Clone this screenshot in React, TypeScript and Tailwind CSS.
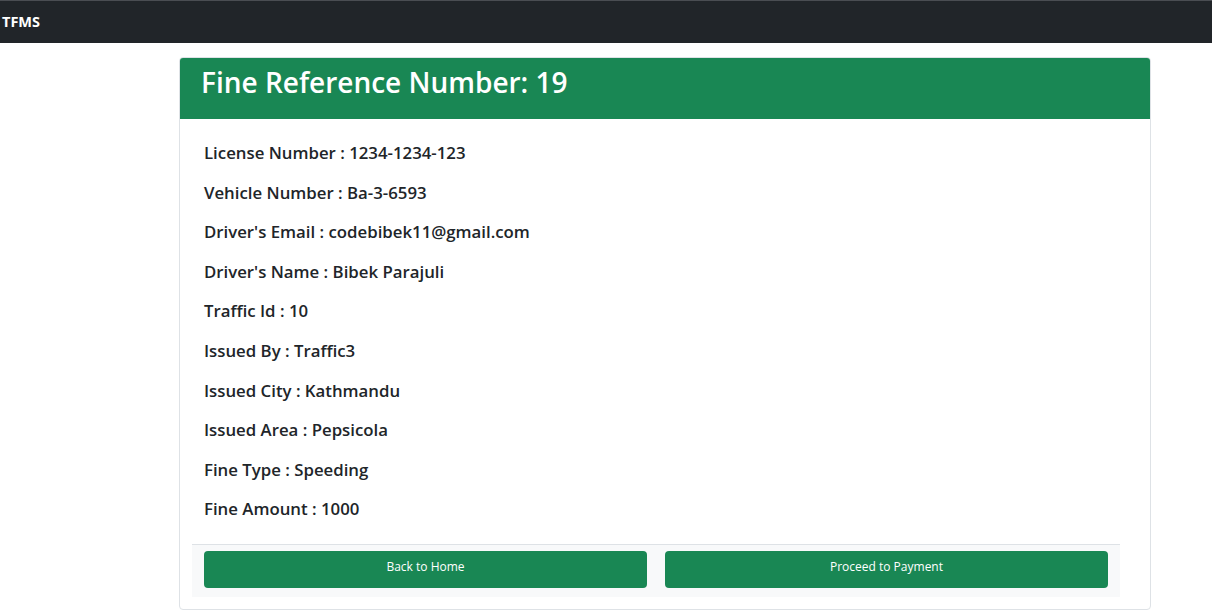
const details = [
  ["License Number", "1234-1234-123"],
  ["Vehicle Number", "Ba-3-6593"],
  ["Driver's Email", "codebibek11@gmail.com"],
  ["Driver's Name", "Bibek Parajuli"],
  ["Traffic Id", "10"],
  ["Issued By", "Traffic3"],
  ["Issued City", "Kathmandu"],
  ["Issued Area", "Pepsicola"],
  ["Fine Type", "Speeding"],
  ["Fine Amount", "1000"],
];

export default function App() {
  return (
    <div className="min-h-[615px] bg-white text-[#212529] font-['Open_Sans',sans-serif]">
      <nav className="h-[43px] bg-[#212529] border-t border-[#4a4d52] flex items-center">
        <span className="pl-[2px] text-white font-bold text-[14.5px]">TFMS</span>
      </nav>

      <div className="pt-[14px] pl-[179px] w-[1151px]">
        <div className="border border-[#dee2e6] rounded-[4px] overflow-hidden h-[553px] flex flex-col">
          <div className="bg-[#198754] h-[61px] px-[21px] pt-[4px]">
            <h1 className="text-white text-[28px] leading-[40px] font-semibold">Fine Reference Number: 19</h1>
          </div>
          <div className="pt-[24px] pl-[24px] flex flex-col gap-[19.6px]">
            {details.map(([label, value]) => (
              <p key={label} className="text-[16.8px] leading-[20px] font-semibold">
                {label} : {value}
              </p>
            ))}
          </div>
          <div className="mt-[25px] ml-[12px] w-[928px] bg-[#f8f9fa] border-t border-[#dee2e6] px-[12px] pt-[6px] pb-[9px] flex gap-[18px]">
            <button className="flex-1 h-[37px] bg-[#198754] text-white text-[12px] rounded-[4px] pb-[6px]">
              Back to Home
            </button>
            <button className="flex-1 h-[37px] bg-[#198754] text-white text-[12px] rounded-[4px] pb-[6px]">
              Proceed to Payment
            </button>
          </div>
        </div>
      </div>
    </div>
  );
}
